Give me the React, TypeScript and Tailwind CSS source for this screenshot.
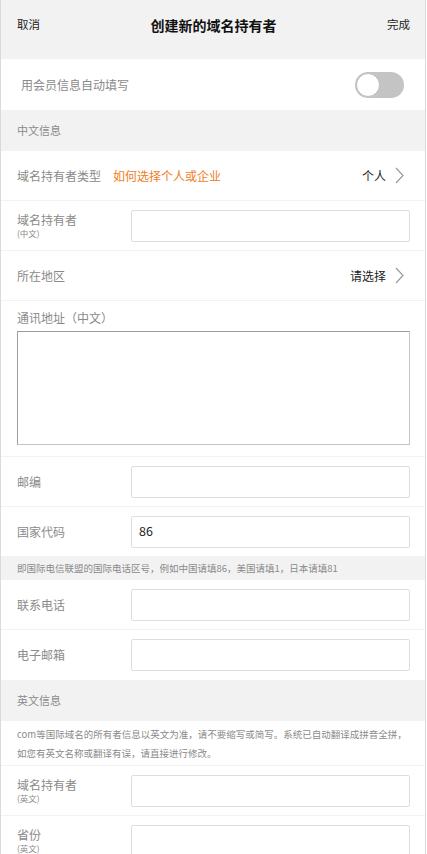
import React from "react";

const font = { fontFamily: '"Noto Sans CJK SC", "Noto Sans", sans-serif' };

function Chevron() {
  return (
    <svg width="9" height="17" viewBox="0 0 9 17" className="ml-[9px]">
      <polyline points="1,1 8,8.5 1,16" fill="none" stroke="#9a9a9a" strokeWidth="1.2" />
    </svg>
  );
}

function Label({ main, sub }: { main: string; sub?: string }) {
  return (
    <div className="w-[114px] shrink-0 flex flex-col justify-center">
      <span className="text-[12px] leading-[16px] text-[#8a8a8a]">{main}</span>
      {sub && <span className="text-[8.5px] leading-[11px] text-[#8a8a8a]">{sub}</span>}
    </div>
  );
}

function InputRow({ main, sub, value }: { main: string; sub?: string; value?: string }) {
  return (
    <div className="h-[50px] flex items-center pl-[16px] pr-[15px] border-b border-[#f2f2f2] bg-white">
      <Label main={main} sub={sub} />
      <div className="flex-1 h-[32px] border border-[#dedede] rounded-[2px] flex items-center px-[7px] text-[12.5px] text-[#222]">
        {value}
      </div>
    </div>
  );
}

export default function App() {
  return (
    <div style={font} className="w-[427px] min-h-[854px] bg-white">
      <div className="w-[426px] border-x border-[#dadada] overflow-hidden h-[854px]">
        {/* header */}
        <div className="h-[59px] bg-[#f2f2f2] pb-[9px]">
          <div className="h-[50px] flex items-center justify-between pl-[16px] pr-[15px]">
            <span className="text-[11.5px] text-[#222]">取消</span>
            <span className="text-[14px] font-bold text-[#111]">创建新的域名持有者</span>
            <span className="text-[11.5px] text-[#222]">完成</span>
          </div>
        </div>

        {/* toggle */}
        <div className="h-[51px] flex items-center justify-between pl-[20px] pr-[21px] bg-white">
          <span className="text-[12px] text-[#8a8a8a]">用会员信息自动填写</span>
          <div className="w-[49px] h-[26px] rounded-full bg-[#c4c4c4] flex items-center px-[1px]">
            <div className="w-[24px] h-[24px] rounded-full bg-white border border-[#bdbdbd]" />
          </div>
        </div>

        {/* section */}
        <div className="h-[41px] bg-[#f2f2f2] flex items-center pl-[16px]">
          <span className="text-[11px] text-[#8a8a8a]">中文信息</span>
        </div>

        <div className="h-[50px] flex items-center pl-[16px] pr-[21px] border-b border-[#f2f2f2]">
          <span className="text-[12px] text-[#8a8a8a]">域名持有者类型</span>
          <span className="text-[12px] text-[#f07d1e] ml-[12px]">如何选择个人或企业</span>
          <div className="flex-1" />
          <span className="text-[12px] text-[#222]">个人</span>
          <Chevron />
        </div>

        <InputRow main="域名持有者" sub="(中文)" />

        <div className="h-[50px] flex items-center pl-[16px] pr-[21px] border-b border-[#f2f2f2]">
          <span className="text-[12px] text-[#8a8a8a]">所在地区</span>
          <div className="flex-1" />
          <span className="text-[12px] text-[#222]">请选择</span>
          <Chevron />
        </div>

        <div className="h-[156px] pl-[16px] pr-[15px] pt-[9px] border-b border-[#f2f2f2]">
          <div className="text-[12px] leading-[16px] text-[#8a8a8a]">通讯地址（中文）</div>
          <div className="mt-[5px] h-[114px] border border-[#9c9ca2] border-b-[#c4c4c8] border-r-[#c4c4c8]" />
        </div>

        <InputRow main="邮编" />
        <InputRow main="国家代码" value="86" />

        <div className="h-[23px] bg-[#f2f2f2] flex items-center pl-[16px]">
          <span className="text-[9.5px] text-[#8a8a8a]">即国际电信联盟的国际电话区号，例如中国请填86，美国请填1，日本请填81</span>
        </div>

        <InputRow main="联系电话" />
        <div className="h-[50px] flex items-center pl-[16px] pr-[15px] bg-white">
          <Label main="电子邮箱" />
          <div className="flex-1 h-[32px] border border-[#dedede] rounded-[2px]" />
        </div>

        <div className="h-[41px] bg-[#f2f2f2] flex items-center pl-[16px]">
          <span className="text-[11px] text-[#8a8a8a]">英文信息</span>
        </div>

        <div className="pl-[16px] pr-[15px] pt-[4px] pb-[2px] border-b border-[#f2f2f2] text-[9.5px] leading-[19px] text-[#8a8a8a]">
          com等国际域名的所有者信息以英文为准，请不要缩写或简写。系统已自动翻译成拼音全拼，如您有英文名称或翻译有误，请直接进行修改。
        </div>

        <InputRow main="域名持有者" sub="(英文)" />
        <InputRow main="省份" sub="(英文)" />
      </div>
    </div>
  );
}
